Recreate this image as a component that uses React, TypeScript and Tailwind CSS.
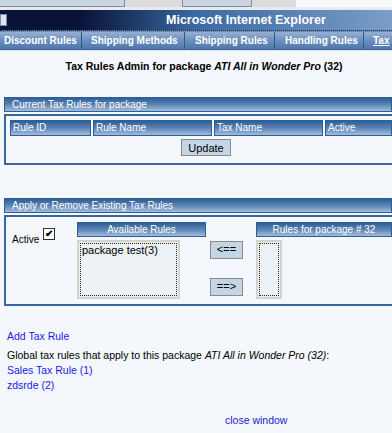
import React from "react";

const headerBar =
  "bg-gradient-to-b from-[#2f5f96] via-[#5c84b6] to-[#a3bcda] border border-[#2d5e95] text-white";

const tabs = [
  { label: "Discount Rules", w: "w-[82px]", pad: "pl-[4px]" },
  { label: "Shipping Methods", w: "w-[103px]", pad: "pl-[9px]" },
  { label: "Shipping Rules", w: "w-[90px]", pad: "pl-[10px]" },
  { label: "Handling Rules", w: "w-[89px]", pad: "pl-[10px]" },
];

const App: React.FC = () => {
  return (
    <div
      className="w-[392px] h-[433px] overflow-hidden bg-[#f4f7fb] text-[10px] text-black"
      style={{ fontFamily: '"Liberation Sans", Arial, sans-serif' }}
    >
      {/* window chrome leftovers */}
      <div className="flex h-[7px] bg-[#f4f7fb]">
        <div className="w-[125px] bg-[#c9d5e2] border-r border-b border-[#8a8a8a]" />
        <div className="w-[57px] bg-[#dcdcdc]" />
        <div className="w-[70px] bg-[#c9d5e2] border-x border-b border-[#8a8a8a]" />
        <div className="w-[44px] bg-[#dcdcdc]" />
        <div className="flex-1 bg-[#f7f9fb]" />
      </div>
      <div className="h-[3px] bg-[#e6ebf1]" />
      <div className="relative flex items-center h-[20px] bg-gradient-to-r from-[#0a1238] from-[20%] via-[#3b6aa2] via-[50%] to-[#7b9dc8]">
        <div className="absolute left-0 top-[4px] w-[7px] h-[12px] bg-[#dce6f2] border border-[#6f8fb8]" />
        <span className="ml-[166px] text-white font-bold text-[12.5px] whitespace-nowrap">
          Microsoft Internet Explorer
        </span>
      </div>
      <div className="h-[2px] border-t border-dotted border-[#1a2a44] bg-[#6c8cb5]" />
      <div className="flex items-center h-[18px] bg-gradient-to-b from-[#96b0d2] via-[#6a8fbf] to-[#5077aa] border-b border-[#3e6699] text-white font-bold text-[10px] whitespace-nowrap">
        {tabs.map((t) => (
          <div
            key={t.label}
            className={`h-full shrink-0 flex items-center border-r border-[#2f5688] ${t.w} ${t.pad}`}
          >
            {t.label}
          </div>
        ))}
        <div className="pl-[9px] underline">Tax</div>
      </div>
      <div className="h-[1px] bg-[#dfe7f1]" />

      <h1 className="mt-[8px] text-center font-bold text-[10.5px] pl-[16px]">
        Tax Rules Admin for package <i>ATI All in Wonder Pro</i> (32)
      </h1>

      {/* current tax rules */}
      <div className="ml-[4px] mt-[22px]">
        <div className={`${headerBar} h-[15px] flex items-center pl-[7px]`}>
          Current Tax Rules for package
        </div>
        <div className="mt-[2px] border-2 border-r-0 border-[#3767a0] h-[51px] pt-[4px] pl-[4px]">
          <div className="flex gap-[2px]">
            <div className={`${headerBar} w-[81px] h-[16px] flex items-center pl-[2px]`}>Rule ID</div>
            <div className={`${headerBar} w-[119px] h-[16px] flex items-center pl-[2px]`}>Rule Name</div>
            <div className={`${headerBar} w-[109px] h-[16px] flex items-center pl-[2px]`}>Tax Name</div>
            <div className={`${headerBar} flex-1 h-[16px] flex items-center pl-[2px]`}>Active</div>
          </div>
          <div className="flex justify-center pl-[10px] mt-[3px]">
            <button className="w-[50px] h-[17px] bg-[#c4d5e6] border border-[#8a8a8a] text-[11px]">
              Update
            </button>
          </div>
        </div>
      </div>

      {/* apply or remove */}
      <div className="ml-[4px] mt-[33px]">
        <div className={`${headerBar} h-[15px] flex items-center pl-[7px]`}>
          Apply or Remove Existing Tax Rules
        </div>
        <div className="mt-[2px] border-2 border-r-0 border-[#3767a0] h-[91px] flex pt-[5px]">
          <div className="flex items-start pl-[6px] pt-[6px] w-[71px]">
            <span className="mt-[4px]">Active</span>
            <span className="ml-[4px] w-[12px] h-[12px] bg-white border border-[#333] flex items-center justify-center text-[10px] leading-none font-bold">
              ✔
            </span>
          </div>
          <div className="w-[129px]">
            <div className={`${headerBar} h-[15px] flex items-center justify-center`}>Available Rules</div>
            <div className="mt-[3px] w-[103px] h-[59px] border-2 border-[#d6d2ca] bg-[#ebf1f5] p-[1px]">
              <div className="h-full border border-dotted border-[#222] text-[11px] leading-[12px] pl-[1px]">
                package test(3)
              </div>
            </div>
          </div>
          <div className="flex flex-col ml-[4px] pt-[19px] gap-[19px]">
            <button className="w-[33px] h-[18px] bg-[#c4d5e6] border border-[#8a8a8a] text-[11px] leading-none">
              &lt;==
            </button>
            <button className="w-[33px] h-[18px] bg-[#c4d5e6] border border-[#8a8a8a] text-[11px] leading-none">
              ==&gt;
            </button>
          </div>
          <div className="flex-1 ml-[13px]">
            <div className={`${headerBar} h-[15px] flex items-center justify-center`}>Rules for package # 32</div>
            <div className="mt-[3px] w-[26px] h-[59px] border-2 border-[#d6d2ca] bg-[#ebf1f5] p-[1px]">
              <div className="h-full border border-dotted border-[#222]" />
            </div>
          </div>
        </div>
      </div>

      <div className="pl-[7px] mt-[23px] text-[10.5px] leading-[15px]">
        <a className="text-[#1a1aee]">Add Tax Rule</a>
        <div className="mt-[4px]">
          Global tax rules that apply to this package <i>ATI All in Wonder Pro (32)</i>:
        </div>
        <div><a className="text-[#1a1aee]">Sales Tax Rule (1)</a></div>
        <div><a className="text-[#1a1aee]">zdsrde (2)</a></div>
        <div className="mt-[20px] pl-[218px]">
          <a className="text-[#1a1acc]">close window</a>
        </div>
      </div>
    </div>
  );
};

export default App;
